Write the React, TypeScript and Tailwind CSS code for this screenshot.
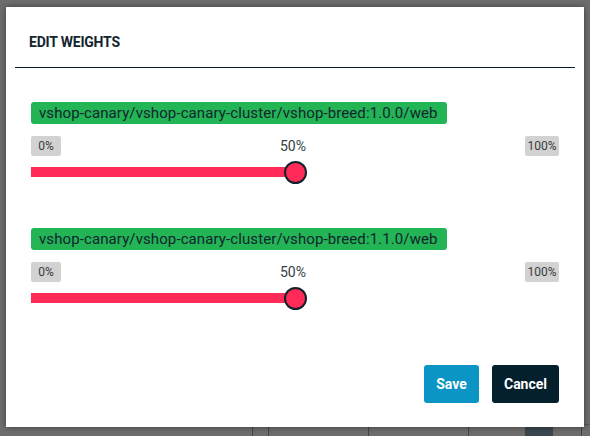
import { useState } from "react";

type Target = {
  name: string;
  weight: number;
};

function WeightSlider({ target, onChange }: { target: Target; onChange: (w: number) => void }) {
  return (
    <div className="flex flex-col">
      <div className="self-start rounded-[3px] bg-[#22b455] pl-[8px] pr-[9px] h-[22px] flex items-center text-[15px] tracking-[0.1px] text-[#13252f] leading-none">
        {target.name}
      </div>
      <div className="mt-[12px] flex items-center justify-between h-[20px]">
        <span className="bg-[#d2d2d2] rounded-[2px] w-[30px] h-[20px] flex items-center justify-center text-[12px] text-[#3a3a3a]">0%</span>
        <span className="text-[14px] text-[#333e45] -mb-[1px]">{target.weight}%</span>
        <span className="bg-[#d2d2d2] rounded-[2px] w-[34px] h-[20px] flex items-center justify-center text-[12px] text-[#3a3a3a]">100%</span>
      </div>
      <div
        className="relative mt-[5px] h-[22px] flex items-center cursor-pointer"
        onClick={(e) => {
          const r = e.currentTarget.getBoundingClientRect();
          onChange(Math.round(((e.clientX - r.left) / r.width) * 100));
        }}
      >
        <div className="h-[10px] bg-[#ff2a55]" style={{ width: `${target.weight}%` }} />
        <div
          className="absolute top-0 w-[23px] h-[23px] -ml-[11px] rounded-full bg-[#ff2a55] border-2 border-[#10222d]"
          style={{ left: `${target.weight}%` }}
        />
      </div>
    </div>
  );
}

export default function App() {
  const [targets, setTargets] = useState<Target[]>([
    { name: "vshop-canary/vshop-canary-cluster/vshop-breed:1.0.0/web", weight: 50 },
    { name: "vshop-canary/vshop-canary-cluster/vshop-breed:1.1.0/web", weight: 50 },
  ]);

  function setWeight(i: number, w: number) {
    setTargets(targets.map((t, j) => (j === i ? { ...t, weight: w } : t)));
  }

  return (
    <div className="w-[590px] h-[436px] overflow-hidden bg-[#6d6d6d] flex flex-col font-['Roboto',sans-serif]">
      <div className="ml-[6px] mt-[7px] w-[578px] h-[420px] bg-white shadow-[0_0_6px_rgba(0,0,0,0.45)] flex flex-col relative z-10">
        <div className="pl-[23px] pt-[27px] h-[60px] text-[14px] leading-[16px] font-bold text-[#13252f] tracking-[-0.2px]">
          EDIT WEIGHTS
        </div>
        <div className="mx-[9px] h-px bg-[#0b1f2a]" />
        <div className="px-[25px] pt-[34px] flex flex-col gap-[45px]">
          {targets.map((t, i) => (
            <WeightSlider key={i} target={t} onChange={(w) => setWeight(i, w)} />
          ))}
        </div>
        <div className="mt-auto mb-[24px] mr-[25px] flex justify-end gap-[13px]">
          <button className="h-[38px] w-[55px] rounded-[3px] bg-[#0a95c4] text-white text-[14px] font-bold">Save</button>
          <button className="h-[38px] w-[67px] rounded-[3px] bg-[#03202c] text-white text-[14px] font-bold">Cancel</button>
        </div>
      </div>
      <div className="flex h-[12px] -mt-[3px] border-t border-[#3f4a50]/60 ml-[252px]">
        <div className="w-[16px] border-l border-[#3b464c]" />
        <div className="w-[100px] border-l border-[#3b464c]" />
        <div className="w-[100px] border-l border-[#3b464c]" />
        <div className="w-[57px] border-l border-[#3b464c]" />
        <div className="w-[27px] border-l border-[#3b464c] bg-[#3a474e]" />
        <div className="w-[29px] border-l border-[#3b464c]" />
        <div className="flex-1 border-l border-[#3b464c]" />
      </div>
    </div>
  );
}
